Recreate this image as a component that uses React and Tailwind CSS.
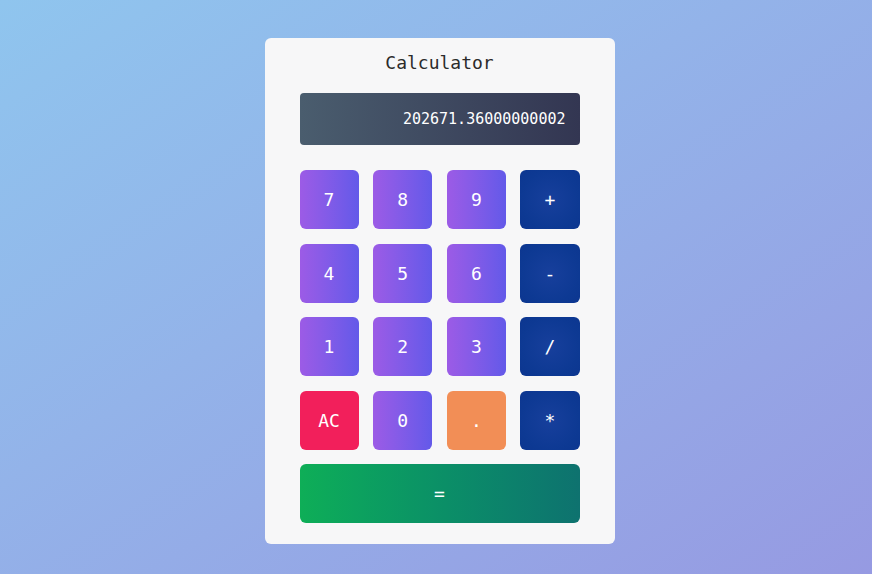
import React from 'react'

const mono = { fontFamily: '"DejaVu Sans Mono", "Liberation Mono", monospace' }

const Key = ({ label, kind = 'num', className = '' }) => {
  const styles = {
    num: 'bg-gradient-to-r from-[#9c5be6] to-[#6359e9]',
    op: 'bg-[radial-gradient(circle_at_center,#173f9c_0%,#0d3993_70%,#0c3690_100%)]',
    clear: 'bg-[#f21f5b]',
    dot: 'bg-[#f28e56]',
    equal: 'bg-gradient-to-r from-[#0eae57] to-[#0e726f]',
  }
  return (
    <button
      className={`h-[59px] rounded-[6px] text-white text-[18px] flex items-center justify-center ${styles[kind]} ${className}`}
      style={mono}
    >
      {label}
    </button>
  )
}

const App = () => {
  const rows = [
    ['7', '8', '9', '+'],
    ['4', '5', '6', '-'],
    ['1', '2', '3', '/'],
  ]

  return (
    <div className="w-[872px] h-[574px] bg-gradient-to-br from-[#8fc5ee] to-[#969ae2] flex justify-center pl-[7px] pt-[38px]">
      <div className="w-[350px] h-[506px] bg-[#f7f7f8] rounded-[6px] px-[35px] pt-[14px]">
        {/* Title */}
        <h1 className="h-[22px] leading-[22px] text-center text-[18px] text-[#2b2b2b]" style={mono}>
          Calculator
        </h1>

        {/* Display */}
        <div
          className="mt-[19px] h-[52px] rounded-[4px] bg-gradient-to-r from-[#4a5d6e] to-[#333652] flex items-center justify-end pr-[14px] text-white text-[15px]"
          style={mono}
        >
          202671.36000000002
        </div>

        {/* Keys */}
        <div className="mt-[25px] grid grid-cols-4 gap-x-[14.67px] gap-y-[14.5px]">
          {rows.map((row) =>
            row.map((k, i) => <Key key={k} label={k} kind={i === 3 ? 'op' : 'num'} />)
          )}
          <Key label="AC" kind="clear" />
          <Key label="0" />
          <Key label="." kind="dot" />
          <Key label="*" kind="op" />
          <Key label="=" kind="equal" className="col-span-4" />
        </div>
      </div>
    </div>
  )
}

export default App
